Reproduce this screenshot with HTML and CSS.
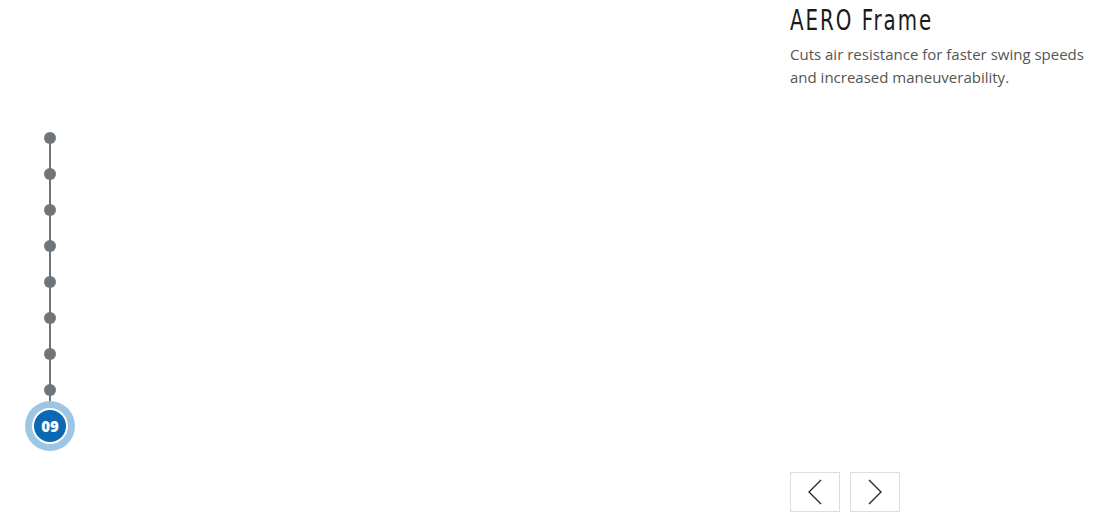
FILE: index.html
```html
<!DOCTYPE html>
<html lang="en">
  <head>
    <meta charset="UTF-8" />
    <meta name="viewport" content="width=device-width, initial-scale=1.0" />
    <title>AERO Frame</title>
    <link rel="stylesheet" href="styles.css">
  </head>
  <body>
    <div class="page">
      <div class="timeline">
        <div class="track">
          <span class="dot"></span>
          <span class="dot"></span>
          <span class="dot"></span>
          <span class="dot"></span>
          <span class="dot"></span>
          <span class="dot"></span>
          <span class="dot"></span>
          <span class="dot"></span>
          <span class="current"><span class="num">09</span></span>
        </div>
      </div>

      <div class="feature">
        <h1 class="title"><span>AERO Frame</span></h1>
        <p class="desc">Cuts air resistance for faster swing speeds and increased maneuverability.</p>

        <div class="nav">
          <a href="#" class="nav-btn" aria-label="Previous">
            <svg width="14" height="26" viewBox="0 0 14 26">
              <path d="M13 1 L1 13 L13 25" fill="none" stroke="#222" stroke-width="1.3" />
            </svg>
          </a>
          <a href="#" class="nav-btn" aria-label="Next">
            <svg width="14" height="26" viewBox="0 0 14 26">
              <path d="M1 1 L13 13 L1 25" fill="none" stroke="#222" stroke-width="1.3" />
            </svg>
          </a>
        </div>
      </div>
    </div>
  </body>
</html>
```

FILE: styles.css
```css
html, body {
  margin: 0;
  padding: 0;
  background-color: white;
}
body {
  font-family: "Open Sans", Arial, sans-serif;
  color: #333;
}
.page {
  display: flex;
  height: 518px;
}
.timeline {
  width: 790px;
  padding-top: 132px;
  box-sizing: border-box;
}
.track {
  position: relative;
  display: flex;
  flex-direction: column;
  align-items: center;
  gap: 24px;
  width: 100px;
}
.track::before {
  content: "";
  position: absolute;
  left: 49px;
  top: 6px;
  height: 272px;
  width: 2px;
  background-color: #6f7579;
}
.dot {
  position: relative;
  width: 12px;
  height: 12px;
  border-radius: 50%;
  background-color: #6f7579;
}
.current {
  position: relative;
  margin-top: -19px;
  width: 50px;
  height: 50px;
  border-radius: 50%;
  background-color: #9dc6e4;
  display: flex;
  align-items: center;
  justify-content: center;
}
.num {
  width: 32px;
  height: 32px;
  border-radius: 50%;
  background-color: #0b69b4;
  box-shadow: 0 0 0 2px white;
  color: white;
  font-family: "Open Sans", sans-serif;
  font-weight: 800;
  font-size: 15px;
  line-height: 32px;
  text-align: center;
}
.feature {
  display: flex;
  flex-direction: column;
  width: 320px;
}
.title {
  margin: 2px 0 0;
  font-family: "DejaVu Sans Condensed", "DejaVu Sans", sans-serif;
  font-weight: normal;
  font-size: 29px;
  letter-spacing: 2.6px;
  line-height: 36px;
  color: #1a1a1a;
  white-space: nowrap;
}
.title span {
  display: inline-block;
  transform: scaleX(0.76);
  transform-origin: left center;
}
.desc {
  margin: 5px 0 0;
  width: 310px;
  font-size: 15px;
  line-height: 23px;
  color: #555;
}
.nav {
  margin-top: auto;
  margin-bottom: 6px;
  display: flex;
  gap: 10px;
}
.nav-btn {
  display: flex;
  align-items: center;
  justify-content: center;
  width: 50px;
  height: 40px;
  box-sizing: border-box;
  border: 1px solid #ddd;
  text-decoration: none;
}
```
